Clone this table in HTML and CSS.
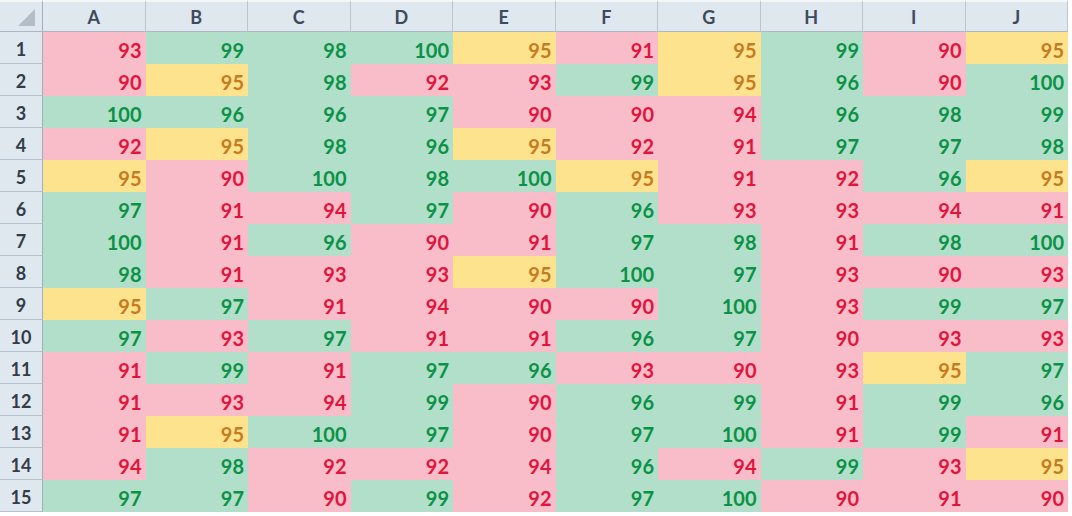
FILE: index.html
```html
<!DOCTYPE html>
<html>
<head>
<meta charset="utf-8">
<link rel="stylesheet" href="styles.css">
</head>
<body>
<div class="sheet">
  <div class="corner"><span class="tri"></span></div>
  <div class="ch">A</div><div class="ch">B</div><div class="ch">C</div><div class="ch">D</div><div class="ch">E</div><div class="ch">F</div><div class="ch">G</div><div class="ch">H</div><div class="ch">I</div><div class="ch">J</div>

  <div class="rh">1</div><div class="c r">93</div><div class="c g">99</div><div class="c g">98</div><div class="c g">100</div><div class="c y">95</div><div class="c r">91</div><div class="c y">95</div><div class="c g">99</div><div class="c r">90</div><div class="c y">95</div>
  <div class="rh">2</div><div class="c r">90</div><div class="c y">95</div><div class="c g">98</div><div class="c r">92</div><div class="c r">93</div><div class="c g">99</div><div class="c y">95</div><div class="c g">96</div><div class="c r">90</div><div class="c g">100</div>
  <div class="rh">3</div><div class="c g">100</div><div class="c g">96</div><div class="c g">96</div><div class="c g">97</div><div class="c r">90</div><div class="c r">90</div><div class="c r">94</div><div class="c g">96</div><div class="c g">98</div><div class="c g">99</div>
  <div class="rh">4</div><div class="c r">92</div><div class="c y">95</div><div class="c g">98</div><div class="c g">96</div><div class="c y">95</div><div class="c r">92</div><div class="c r">91</div><div class="c g">97</div><div class="c g">97</div><div class="c g">98</div>
  <div class="rh">5</div><div class="c y">95</div><div class="c r">90</div><div class="c g">100</div><div class="c g">98</div><div class="c g">100</div><div class="c y">95</div><div class="c r">91</div><div class="c r">92</div><div class="c g">96</div><div class="c y">95</div>
  <div class="rh">6</div><div class="c g">97</div><div class="c r">91</div><div class="c r">94</div><div class="c g">97</div><div class="c r">90</div><div class="c g">96</div><div class="c r">93</div><div class="c r">93</div><div class="c r">94</div><div class="c r">91</div>
  <div class="rh">7</div><div class="c g">100</div><div class="c r">91</div><div class="c g">96</div><div class="c r">90</div><div class="c r">91</div><div class="c g">97</div><div class="c g">98</div><div class="c r">91</div><div class="c g">98</div><div class="c g">100</div>
  <div class="rh">8</div><div class="c g">98</div><div class="c r">91</div><div class="c r">93</div><div class="c r">93</div><div class="c y">95</div><div class="c g">100</div><div class="c g">97</div><div class="c r">93</div><div class="c r">90</div><div class="c r">93</div>
  <div class="rh">9</div><div class="c y">95</div><div class="c g">97</div><div class="c r">91</div><div class="c r">94</div><div class="c r">90</div><div class="c r">90</div><div class="c g">100</div><div class="c r">93</div><div class="c g">99</div><div class="c g">97</div>
  <div class="rh">10</div><div class="c g">97</div><div class="c r">93</div><div class="c g">97</div><div class="c r">91</div><div class="c r">91</div><div class="c g">96</div><div class="c g">97</div><div class="c r">90</div><div class="c r">93</div><div class="c r">93</div>
  <div class="rh">11</div><div class="c r">91</div><div class="c g">99</div><div class="c r">91</div><div class="c g">97</div><div class="c g">96</div><div class="c r">93</div><div class="c r">90</div><div class="c r">93</div><div class="c y">95</div><div class="c g">97</div>
  <div class="rh">12</div><div class="c r">91</div><div class="c r">93</div><div class="c r">94</div><div class="c g">99</div><div class="c r">90</div><div class="c g">96</div><div class="c g">99</div><div class="c r">91</div><div class="c g">99</div><div class="c g">96</div>
  <div class="rh">13</div><div class="c r">91</div><div class="c y">95</div><div class="c g">100</div><div class="c g">97</div><div class="c r">90</div><div class="c g">97</div><div class="c g">100</div><div class="c r">91</div><div class="c g">99</div><div class="c r">91</div>
  <div class="rh">14</div><div class="c r">94</div><div class="c g">98</div><div class="c r">92</div><div class="c r">92</div><div class="c r">94</div><div class="c g">96</div><div class="c r">94</div><div class="c g">99</div><div class="c r">93</div><div class="c y">95</div>
  <div class="rh">15</div><div class="c g">97</div><div class="c g">97</div><div class="c r">90</div><div class="c g">99</div><div class="c r">92</div><div class="c g">97</div><div class="c g">100</div><div class="c r">90</div><div class="c r">91</div><div class="c r">90</div>
</div>
</body>
</html>
```

FILE: styles.css
```css
html, body {
  margin: 0;
  padding: 0;
  background: #ffffff;
  overflow: hidden;
}

.sheet {
  display: grid;
  grid-template-columns: 43px repeat(10, 102.5px);
  grid-template-rows: 32px repeat(15, 32px);
  width: 1068px;
  font-family: Lato, "Open Sans", sans-serif;
}

.corner {
  position: relative;
  background: #dfe7ef;
  border-top: 2px solid #f4f6f8;
  border-right: 1px solid #9fb0c2;
  border-bottom: 1px solid #a9b8c7;
  box-sizing: border-box;
}

.tri {
  position: absolute;
  right: 7px;
  bottom: 5px;
  width: 0;
  height: 0;
  border-left: 17px solid transparent;
  border-bottom: 17px solid #b4bcc5;
}

.ch {
  background: #dfe7ef;
  border-top: 2px solid #f4f6f8;
  border-right: 1px solid #b9c6d3;
  border-bottom: 1px solid #a9b8c7;
  box-sizing: border-box;
  display: flex;
  align-items: center;
  justify-content: center;
  font-size: 18px;
  font-weight: 700;
  color: #3d4b5c;
  padding-top: 1px;
}

.rh {
  background: #dfe7ef;
  border-right: 1px solid #9fb0c2;
  border-bottom: 1px solid #b3c1cf;
  box-sizing: border-box;
  display: flex;
  align-items: center;
  justify-content: center;
  font-size: 18px;
  font-weight: 700;
  color: #333c48;
  padding-top: 2px;
}

.c {
  display: flex;
  align-items: center;
  justify-content: flex-end;
  padding: 3px 4px 0 0;
  box-sizing: border-box;
  font-size: 20px;
  font-weight: 700;
}

.r {
  background: #f9bdca;
  color: #e0153c;
}

.g {
  background: #b2dfc9;
  color: #0b9247;
}

.y {
  background: #fde38d;
  color: #c77a1e;
}
```
